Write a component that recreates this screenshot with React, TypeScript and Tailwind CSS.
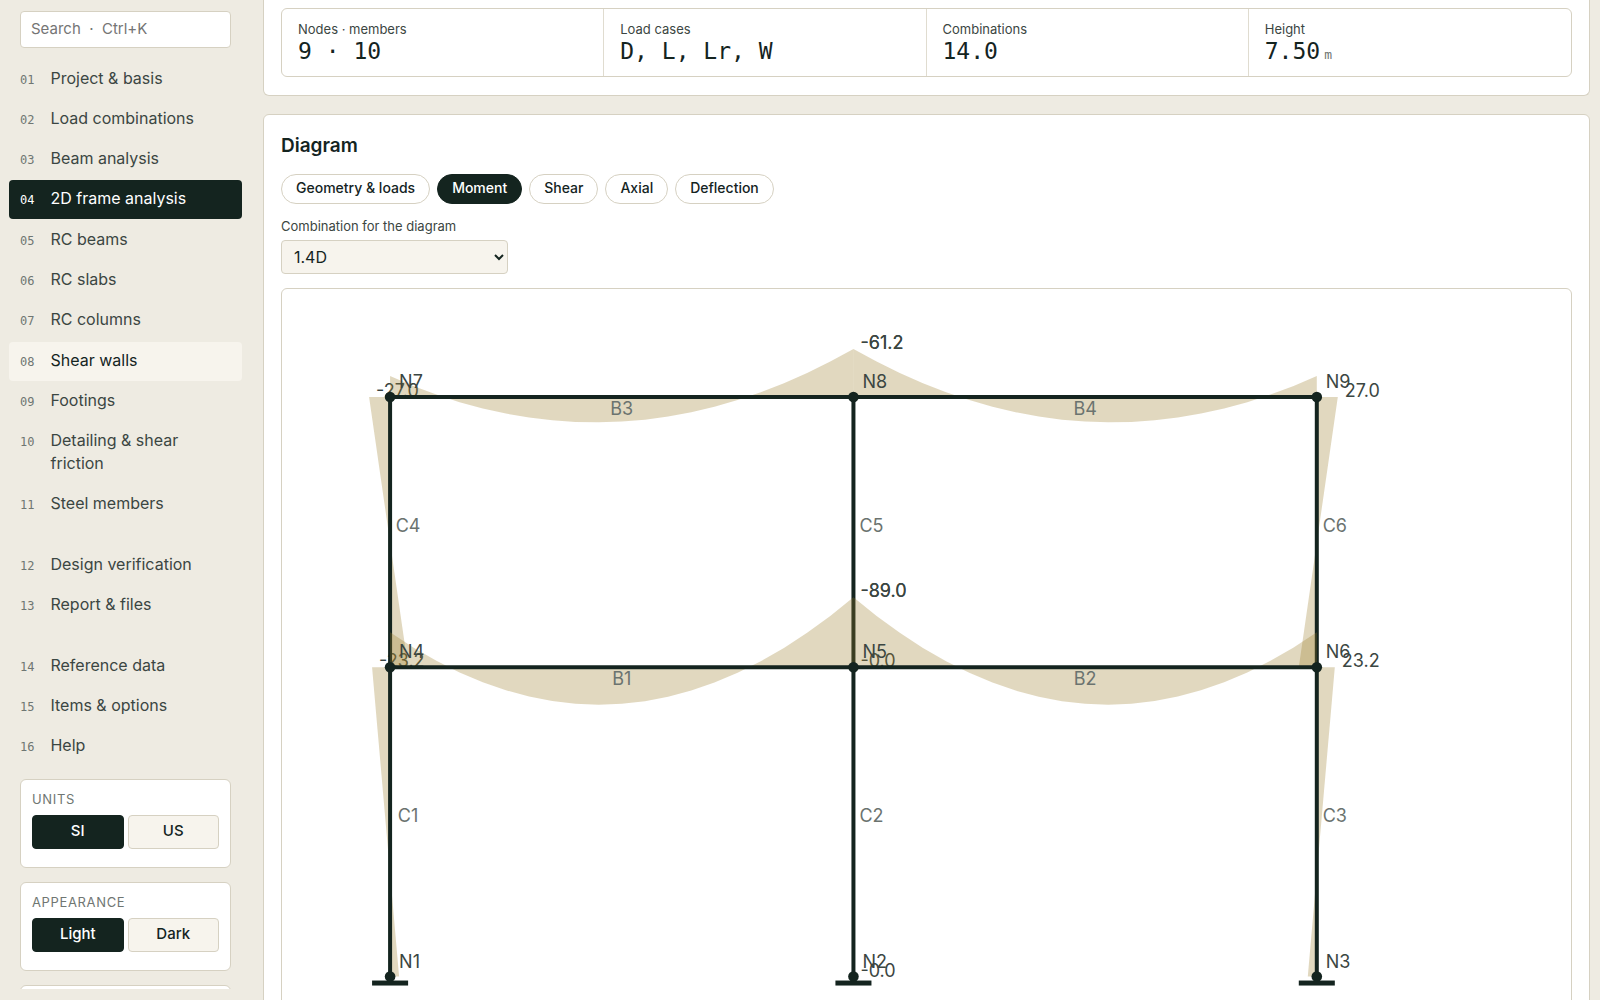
import clsx from "clsx";
import { useState } from "react";

type NavItem = { no: string; label: string };

const navSections: NavItem[][][] = [
  [
    [
      { no: "01", label: "Project & basis" },
      { no: "02", label: "Load combinations" },
      { no: "03", label: "Beam analysis" },
      { no: "04", label: "2D frame analysis" },
    ],
    [
      { no: "05", label: "RC beams" },
      { no: "06", label: "RC slabs" },
      { no: "07", label: "RC columns" },
    ],
    [
      { no: "08", label: "Shear walls" },
      { no: "09", label: "Footings" },
      { no: "10", label: "Detailing & shear friction" },
      { no: "11", label: "Steel members" },
    ],
  ],
  [
    [
      { no: "12", label: "Design verification" },
      { no: "13", label: "Report & files" },
    ],
  ],
  [
    [
      { no: "14", label: "Reference data" },
      { no: "15", label: "Items & options" },
      { no: "16", label: "Help" },
    ],
  ],
];

const stats = [
  { label: "Nodes · members", value: "9 · 10" },
  { label: "Load cases", value: "D, L, Lr, W" },
  { label: "Combinations", value: "14.0" },
  { label: "Height", value: "7.50", unit: "m" },
];

const diagrams = ["Geometry & loads", "Moment", "Shear", "Axial", "Deflection"];

const combinations = ["1.4D", "1.2D + 1.6L + 0.5Lr", "1.2D + 1.6Lr + L", "0.9D + W"];

// frame grid in drawing units
const X = [108, 571, 1034];
const Y = [687, 378, 108];

const nodes = Y.flatMap((y, row) =>
  X.map((x, col) => ({ id: `N${row * 3 + col + 1}`, x, y })),
);

// start / end are ordinates of the moment curve, sag is the span parabola
type Member = {
  id: string;
  from: number;
  to: number;
  start: number;
  end: number;
  sag: number;
  value: string;
  peak: "from" | "to";
};

const members: Member[] = [
  { id: "C1", from: 0, to: 3, start: 9, end: -18, sag: 0, value: "-23.2", peak: "to" },
  { id: "C2", from: 1, to: 4, start: 0, end: 0, sag: 0, value: "-0.0", peak: "from" },
  { id: "C3", from: 2, to: 5, start: -9, end: 18, sag: 0, value: "23.2", peak: "to" },
  { id: "C4", from: 3, to: 6, start: 18, end: -21, sag: 0, value: "-27.0", peak: "to" },
  { id: "C5", from: 4, to: 7, start: 0, end: 0, sag: 0, value: "-0.0", peak: "from" },
  { id: "C6", from: 5, to: 8, start: -18, end: 21, sag: 0, value: "27.0", peak: "to" },
  { id: "B1", from: 3, to: 4, start: -35, end: -70, sag: 89, value: "-89.0", peak: "to" },
  { id: "B2", from: 4, to: 5, start: -70, end: -35, sag: 89, value: "-89.0", peak: "from" },
  { id: "B3", from: 6, to: 7, start: -21, end: -48, sag: 59, value: "-61.2", peak: "to" },
  { id: "B4", from: 7, to: 8, start: -48, end: -21, sag: 59, value: "-61.2", peak: "from" },
];

const STEPS = 20;

const MemberShape = ({ member }: { member: Member }) => {
  const a = nodes[member.from];
  const b = nodes[member.to];
  const length = Math.hypot(b.x - a.x, b.y - a.y);
  const nx = (a.y - b.y) / length;
  const ny = (b.x - a.x) / length;

  const at = (t: number) => {
    const m =
      member.start + (member.end - member.start) * t + 4 * member.sag * t * (1 - t);
    return { x: a.x + (b.x - a.x) * t + nx * m, y: a.y + (b.y - a.y) * t + ny * m };
  };
  const curve = Array.from({ length: STEPS + 1 }, (_, i) => at(i / STEPS));
  const points = [a, ...curve, b].map((p) => `${p.x},${p.y}`).join(" ");
  const peak = at(member.peak === "to" ? 1 : 0);

  return (
    <g>
      <polygon points={points} fill="#9b7d2a" fillOpacity={0.3} />
      <line x1={a.x} y1={a.y} x2={b.x} y2={b.y} stroke="#14241f" strokeWidth={4} />
      <text
        x={(a.x + b.x) / 2 + nx * 18}
        y={(a.y + b.y) / 2 + ny * 18}
        textAnchor="middle"
        fill="#6b736f"
      >
        {member.id}
      </text>
      <text x={peak.x + 7} y={peak.y} fill="#3b4642">
        {member.value}
      </text>
    </g>
  );
};

const FrameDiagram = () => (
  <svg
    viewBox="0 0 1288 790"
    className="block w-full text-[18px]"
    role="img"
    aria-label="Bending moment diagram"
  >
    {members.map((member) => (
      <MemberShape key={member.id} member={member} />
    ))}
    {nodes.slice(0, 3).map((node) => (
      <rect key={node.id} x={node.x - 18} y={node.y + 4} width={36} height={5} fill="#14241f" />
    ))}
    {nodes.map((node) => (
      <g key={node.id}>
        <circle cx={node.x} cy={node.y} r={5.3} fill="#14241f" />
        <text x={node.x + 9} y={node.y - 9} fill="#3b4642">
          {node.id}
        </text>
      </g>
    ))}
  </svg>
);

const NavLink = ({ item }: { item: NavItem }) => {
  const active = item.no === "04";
  const hovered = item.no === "08";
  return (
    <a
      href={`#${item.no}`}
      aria-current={active ? "page" : undefined}
      className={clsx(
        "flex items-baseline gap-4 rounded px-[11px] pt-[7px] pb-[9px] text-base leading-[23px]",
        active && "bg-[#14241f] text-white",
        hovered && "bg-[#f7f4ed] text-[#14241f]",
        !active && !hovered && "text-[#3b4642]",
      )}
    >
      <span
        className={clsx(
          "font-['DejaVu_Sans_Mono',monospace] text-xs",
          active ? "text-white" : "text-[#6f7672]",
        )}
      >
        {item.no}
      </span>
      <span>{item.label}</span>
    </a>
  );
};

const cardClass = "shrink-0 rounded-md border border-[#d6d1c2] bg-white px-[11px] pt-[9px] pb-[18px]";

const ToggleCard = ({ title, options }: { title: string; options: string[] }) => {
  const [selected, setSelected] = useState(options[0]);
  return (
    <section className={cardClass}>
      <h3 className="text-[13px] leading-5 tracking-wider text-[#6f7672] uppercase">{title}</h3>
      <div className="mt-[6px] grid grid-cols-2 gap-1">
        {options.map((option) => (
          <button
            key={option}
            type="button"
            aria-pressed={selected === option}
            onClick={() => setSelected(option)}
            className={clsx(
              "rounded border pt-1 pb-[6px] text-[15px] leading-[22px] font-medium",
              selected === option
                ? "border-[#14241f] bg-[#14241f] text-white"
                : "border-[#d6d1c2] bg-[#f7f4ed] text-[#14241f]",
            )}
          >
            {option}
          </button>
        ))}
      </div>
    </section>
  );
};

const Sidebar = () => (
  <aside className="flex w-[263px] shrink-0 flex-col py-[11px] pr-[21px] pl-[9px]">
    <div className="flex min-h-0 flex-1 flex-col overflow-hidden">
      <input
        type="text"
        aria-label="Search"
        placeholder="Search  ·  Ctrl+K"
        className="mx-[11px] h-[37px] shrink-0 rounded border border-[#d6d1c2] bg-white px-[10px] pb-[3px] text-[15px] outline-none placeholder:text-[#757575]"
      />
      <nav className="mt-3 flex shrink-0 flex-col gap-[22px]">
        {navSections.map((section, i) => (
          <div key={i} className="flex flex-col gap-[2px]">
            {section.map((group) => (
              <div key={group[0].no} className="flex flex-col gap-px">
                {group.map((item) => (
                  <NavLink key={item.no} item={item} />
                ))}
              </div>
            ))}
          </div>
        ))}
      </nav>
      <div className="mx-[11px] mt-[13px] flex flex-col gap-[14px]">
        <ToggleCard title="Units" options={["SI", "US"]} />
        <ToggleCard title="Appearance" options={["Light", "Dark"]} />
        <section className={cardClass} />
      </div>
    </div>
  </aside>
);

export default function App() {
  const [diagram, setDiagram] = useState("Moment");

  return (
    <div className="flex h-screen overflow-hidden bg-[#eeebe2] font-['Inter',sans-serif] text-[#14241f]">
      <Sidebar />
      <main className="flex min-w-0 flex-1 flex-col gap-[18px] overflow-y-auto pr-[10px] [scrollbar-width:none]">
        <section className="shrink-0 rounded-b-md border border-t-0 border-[#d6d1c2] bg-white px-[17px] pt-2 pb-[18px]">
          <dl className="grid grid-cols-4 divide-x divide-[#e0dcd0] rounded-md border border-[#d6d1c2]">
            {stats.map((stat) => (
              <div key={stat.label} className="px-4 pt-[11px] pb-[11px]">
                <dt className="text-[13px] leading-[18px] text-[#3b4642]">{stat.label}</dt>
                <dd className="font-['DejaVu_Sans_Mono',monospace] text-[23px] leading-[27px]">
                  {stat.value}
                  {stat.unit && (
                    <span className="ml-1 text-[13px] leading-none text-[#6f7672]">
                      {stat.unit}
                    </span>
                  )}
                </dd>
              </div>
            ))}
          </dl>
        </section>

        <section className="shrink-0 rounded-md border border-[#d6d1c2] bg-white px-[17px] pt-[17px] pb-[18px]">
          <h2 className="text-[19px] leading-7 font-semibold">Diagram</h2>
          <div className="mt-[14px] flex flex-wrap gap-[7px]">
            {diagrams.map((name) => (
              <button
                key={name}
                type="button"
                aria-pressed={diagram === name}
                onClick={() => setDiagram(name)}
                className={clsx(
                  "rounded-full border px-[14px] pt-[3px] pb-[5px] text-sm leading-5 font-medium",
                  diagram === name
                    ? "border-[#14241f] bg-[#14241f] text-white"
                    : "border-[#d6d1c2] bg-white",
                )}
              >
                {name}
              </button>
            ))}
          </div>
          <label
            htmlFor="combination"
            className="mt-3 block text-[13px] leading-5 text-[#3b4642]"
          >
            Combination for the diagram
          </label>
          <select
            id="combination"
            className="mt-1 block h-[34px] w-[227px] rounded border border-[#d6d1c2] bg-[#f7f4ed] px-2 text-base"
          >
            {combinations.map((name) => (
              <option key={name}>{name}</option>
            ))}
          </select>
          <div className="mt-[14px] overflow-hidden rounded-md border border-[#d6d1c2]">
            <FrameDiagram />
          </div>
        </section>
      </main>
    </div>
  );
}
